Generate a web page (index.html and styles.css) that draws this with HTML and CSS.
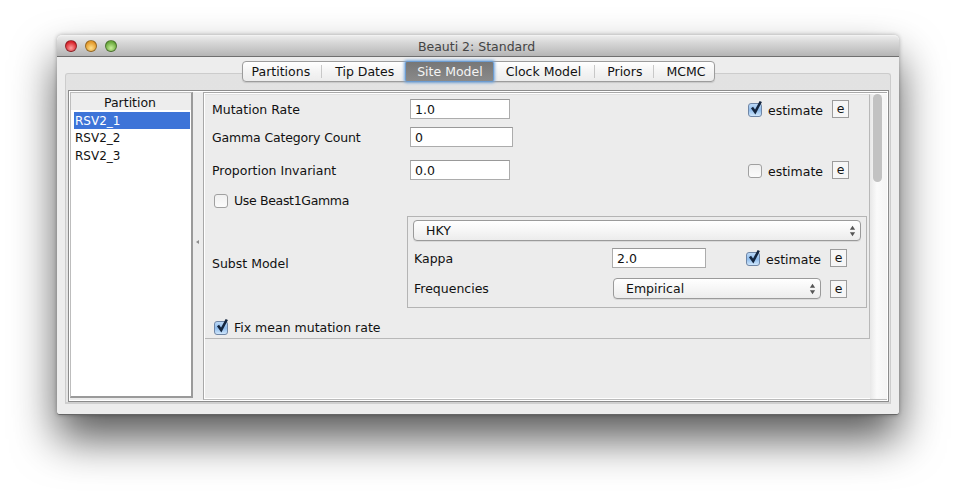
FILE: index.html
```html
<!DOCTYPE html>
<html>
	<head>
		<meta charset="UTF-8">
		<title>Beauti 2: Standard</title>
		<link rel="stylesheet" href="styles.css">
	</head>
	<body>
		<div class="window">
			<div class="titlebar">
				<div class="lights">
					<span class="light red"></span>
					<span class="light amber"></span>
					<span class="light green"></span>
				</div>
				<div class="title">Beauti 2: Standard</div>
			</div>
			<div class="content">
				<ul class="tabs">
					<li>Partitions</li>
					<li>Tip Dates</li>
					<li class="active">Site Model</li>
					<li>Clock Model</li>
					<li>Priors</li>
					<li>MCMC</li>
				</ul>
				<div class="pane">
					<div class="frame">
						<div class="side">
							<div class="side-head">Partition</div>
							<ul class="list">
								<li class="selected">RSV2_1</li>
								<li>RSV2_2</li>
								<li>RSV2_3</li>
							</ul>
						</div>
						<div class="split"><span class="grip"></span></div>
						<div class="main">
							<div class="form">
								<div class="panel">
									<div class="row">
										<div class="label">Mutation Rate</div>
										<div class="field">1.0</div>
										<div class="est">
											<span class="check on"><svg viewBox="0 0 16 16"><path d="M4 7.5 L7.2 12 L12.8 1.5" /></svg></span>
											<span class="est-text">estimate</span>
											<span class="e">e</span>
										</div>
									</div>
									<div class="row">
										<div class="label gamma">Gamma Category Count</div>
										<div class="field wide">0</div>
									</div>
									<div class="row third">
										<div class="label">Proportion Invariant</div>
										<div class="field">0.0</div>
										<div class="est">
											<span class="check"></span>
											<span class="est-text">estimate</span>
											<span class="e">e</span>
										</div>
									</div>
									<div class="row fourth">
										<span class="check small"></span>
										<span class="check-label beast">Use Beast1Gamma</span>
									</div>
									<div class="subst">
										<div class="subst-label">Subst Model</div>
										<div class="subst-box">
											<div class="select top">
												<span>HKY</span>
												<svg class="arrows" viewBox="0 0 8 12"><path d="M4 0 L7 4.5 H1 Z M4 12 L7 7.5 H1 Z" /></svg>
											</div>
											<div class="sub-row kappa">
												<div class="label">Kappa</div>
												<div class="field kappa-field">2.0</div>
												<div class="est">
													<span class="check on"><svg viewBox="0 0 16 16"><path d="M4 7.5 L7.2 12 L12.8 1.5" /></svg></span>
													<span class="est-text">estimate</span>
													<span class="e">e</span>
												</div>
											</div>
											<div class="sub-row freq">
												<div class="label">Frequencies</div>
												<div class="select mid">
													<span>Empirical</span>
													<svg class="arrows" viewBox="0 0 8 12"><path d="M4 0 L7 4.5 H1 Z M4 12 L7 7.5 H1 Z" /></svg>
												</div>
												<span class="e">e</span>
											</div>
										</div>
									</div>
									<div class="row last">
										<span class="check small on"><svg viewBox="0 0 16 16"><path d="M4 7.5 L7.2 12 L12.8 1.5" /></svg></span>
										<span class="check-label">Fix mean mutation rate</span>
									</div>
								</div>
							</div>
							<div class="scrollbar"><div class="thumb"></div></div>
						</div>
					</div>
				</div>
			</div>
		</div>
	</body>
</html>
```

FILE: styles.css
```css
*{
	padding: 0;
	margin: 0;
	box-sizing: border-box;
}
html,body{
	background: #fff;
	height: 493px;
	overflow: hidden;
}
body{
	font-size: 12.5px;
	font-family: "DejaVu Sans", "Liberation Sans", sans-serif;
	color: #111;
	padding: 35px 0 0 57px;
}
ul,li{
	list-style: none;
}
.window {
	width: 842px;
	height: 380px;
	border-radius: 5px 5px 3px 3px;
	display: flex;
	flex-direction: column;
	background: #ededed;
	box-shadow: 0 24px 44px rgba(0,0,0,.65), 0 0 4px rgba(0,0,0,.3);
	border-bottom: 1px solid #666;
}

/* title bar */
.titlebar {
	height: 22px;
	flex: none;
	display: flex;
	align-items: center;
	background: linear-gradient(#ececec, #d9d9d9 30%, #b5b5b5);
	border-top: 1px solid #f2f2f2;
	border-bottom: 1px solid #6f6f6f;
	border-radius: 5px 5px 0 0;
	position: relative;
}
.lights {
	display: flex;
	gap: 8px;
	padding-left: 8px;
}
.light {
	width: 12px;
	height: 12px;
	border-radius: 50%;
	border: 1px solid rgba(0,0,0,.35);
}
.red { background: radial-gradient(circle at 50% 70%, #ffa0a0, #d8242c 70%); }
.amber { background: radial-gradient(circle at 50% 70%, #ffe08a, #e2982a 70%); }
.green { background: radial-gradient(circle at 50% 70%, #c8f09a, #69a83c 70%); }
.title {
	position: absolute;
	left: -3px;
	right: 0;
	text-align: center;
	color: #444;
	font-size: 12.5px;
}

/* tabs */
.content {
	flex: 1;
	display: flex;
	flex-direction: column;
	align-items: center;
	padding: 4px 8px 10px;
	min-height: 0;
}
.tabs {
	display: flex;
	height: 21px;
	margin: 0 0 -9px 1px;
	background: linear-gradient(#fff, #f4f4f4 50%, #ececec);
	border: 1px solid #9c9c9c;
	border-radius: 4px;
	position: relative;
	z-index: 2;
	align-items: center;
	box-shadow: 0 1px 1px rgba(0,0,0,.12);
}
.tabs li {
	height: 13px;
	line-height: 13px;
	padding: 0 12px;
	border-right: 1px solid #c8c8c8;
}
.tabs li:first-child { padding-left: 9px; padding-right: 11px; }
.tabs li:nth-child(2) { padding-left: 13px; padding-right: 11px; border-right: 0; }
.tabs li:nth-child(4) { padding-left: 12px; padding-right: 13px; }
.tabs li:nth-child(5) { padding-right: 11px; }
.tabs li:last-child { padding-right: 9px; border-right: 0; }
.tabs li.active {
	height: 21px;
	line-height: 19px;
	padding: 0 10px 0 11px;
	color: #f4f4f4;
	background: linear-gradient(#777, #8a8a8a);
	border: 1px solid #6d9cd0;
	border-radius: 2px;
	box-shadow: 0 0 3px 1px #7aa9dc;
	position: relative;
}

/* tab pane */
.pane {
	width: 826px;
	flex: 1;
	min-height: 0;
	background: linear-gradient(#e2e2e2, #e6e6e6);
	border: 1px solid #ccc;
	border-bottom: 2px solid #d0d0d0;
	border-radius: 3px 3px 0 0;
	padding: 16px 1px 0 2px;
	display: flex;
}
.frame {
	flex: 1;
	display: flex;
	background: #ececec;
	border: 1px solid #8c8c8c;
	padding: 1px;
	outline: 0;
	box-shadow: inset 0 0 0 1px #fff;
}
.side {
	width: 123px;
	flex: none;
	margin-bottom: 2px;
	border: 1px solid #bdbdbd;
	border-right: 2px solid #9a9a9a;
	border-bottom: 2px solid #9a9a9a;
	display: flex;
	flex-direction: column;
	background: #fff;
}
.side-head {
	height: 17px;
	line-height: 19px;
	text-align: center;
	background: #ededed;
	flex: none;
	padding-right: 2px;
}
.list {
	flex: 1;
	padding: 2px 1px 0 3px;
}
.list li {
	height: 17.5px;
	line-height: 19px;
	font-size: 12px;
	padding-left: 1px;
}
.list li.selected {
	height: 17px;
	background: #3d74d8;
	color: #fff;
}
.split {
	width: 10px;
	flex: none;
	display: flex;
	align-items: center;
	justify-content: center;
	padding: 0 1px 8px 0;
}
.grip {
	width: 0;
	height: 0;
	border-top: 2px solid transparent;
	border-bottom: 2px solid transparent;
	border-right: 3px solid #8c8c8c;
}

/* right side */
.main {
	flex: 1;
	display: flex;
	border: 1px solid #a8a8a8;
	border-bottom: 1px solid #bbb;
	border-right: 0;
	box-shadow: inset 0 0 0 1px #fff;
	padding: 1px 0 0 1px;
	min-width: 0;
}
.form {
	flex: 1;
	min-width: 0;
	display: flex;
	flex-direction: column;
	align-items: stretch;
}
.panel {
	height: 245px;
	border-right: 1px solid #b8b8b8;
	border-bottom: 1px solid #b8b8b8;
	border-top: 1px solid #e0e0e0;
	padding-left: 7px;
}
.row {
	height: 28px;
	display: flex;
	align-items: center;
	padding-right: 20px;
}
.third { margin-top: 5px; }
.fourth { margin-top: 2px; padding-left: 2px; }
.last {
	margin-top: 8px;
	height: 22px;
	padding-left: 2px;
}
.label {
	width: 198px;
	flex: none;
}
.gamma { letter-spacing: -0.15px; }
.beast { letter-spacing: -0.33px; }
.field {
	width: 100px;
	height: 20px;
	line-height: 19px;
	padding-left: 4px;
	background: #fff;
	border: 1px solid #acacac;
	border-top-color: #999;
}
.wide { width: 103px; }
.kappa-field { width: 94px; }
.est {
	margin-left: auto;
	display: flex;
	align-items: center;
}
.est-text {
	margin: 2px 0 0 6px;
	width: 54px;
}
.e {
	width: 17px;
	height: 18px;
	line-height: 15px;
	text-align: center;
	background: #f6f6f6;
	border: 1px solid #9c9c9c;
	margin-left: 10px;
	flex: none;
}
.check {
	width: 14px;
	height: 14px;
	margin-top: 2px;
	border: 1px solid #a0a0a0;
	border-radius: 3px;
	background: linear-gradient(#f0f0f0, #fbfbfb);
	position: relative;
	flex: none;
}
.check svg {
	position: absolute;
	left: -1px;
	top: -4px;
	width: 16px;
	height: 16px;
	fill: none;
	stroke: #14263f;
	stroke-width: 2.6;
}
.check.on {
	background: linear-gradient(#bcd9f7, #8fbcec 50%, #cfe6fb);
	border-color: #6f86a6;
}
.check.small { margin-right: 6px; }
.subst {
	display: flex;
	align-items: center;
	height: 92px;
	margin-top: 2px;
}
.subst-label {
	width: 195px;
	flex: none;
	padding-top: 2px;
}
.subst-box {
	width: 460px;
	height: 92px;
	border: 1px solid #b4b4b4;
	padding: 3px 5px 0 5px;
}
.select {
	height: 21px;
	display: flex;
	align-items: center;
	justify-content: space-between;
	background: linear-gradient(#fff, #f6f6f6 50%, #ececec);
	border: 1px solid #9a9a9a;
	border-radius: 4px;
	padding: 0 4px 0 12px;
	box-shadow: 0 1px 0 rgba(0,0,0,.08);
}
.arrows {
	width: 7px;
	height: 12px;
	fill: #555;
}
.sub-row {
	display: flex;
	align-items: center;
	margin-left: 1px;
}
.kappa {
	height: 20px;
	margin-top: 7px;
}
.kappa .est { margin-left: 40px; }
.freq {
	height: 21px;
	margin-top: 10px;
}
.freq .select {
	width: 208px;
	margin-left: 1px;
}
.freq .e { margin-left: 9px; }
.scrollbar {
	width: 17px;
	flex: none;
	background: linear-gradient(90deg, #e8e8e8, #fafafa 40%, #f4f4f4);
	padding: 0 4px 0 3px;
}
.thumb {
	width: 9px;
	height: 88px;
	background: #c2c2c2;
	border-radius: 5px;
}
```
